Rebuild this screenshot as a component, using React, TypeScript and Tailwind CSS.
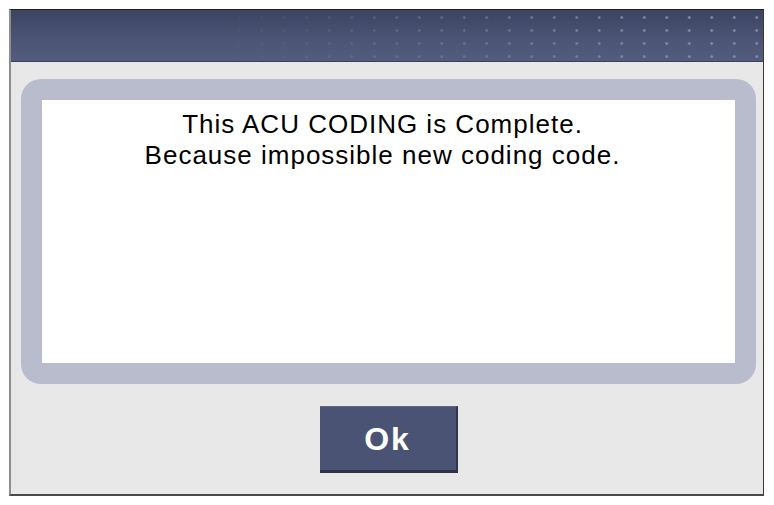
import React from "react";

const App = () => {
  return (
    <div className="w-[774px] h-[505px] bg-white pt-[9px] pl-[9px] font-['Liberation_Sans',Arial,sans-serif]">
      <div className="w-[755px] h-[487px] flex flex-col bg-[#e8e8e8] border-t border-t-[#222] border-l-2 border-l-[#8e8e8e] border-r border-r-[#3a3a3a] border-b-2 border-b-[#4a4a4a]">
        {/* title bar */}
        <div className="relative h-[52px] shrink-0 bg-[linear-gradient(to_bottom,#3d4462,#4c5576_60%,#535c7d)] border-b border-b-[#3a4058]">
          <div className="absolute inset-0 bg-[radial-gradient(circle,#838aa6_1px,transparent_1.6px)] bg-size-[22.5px_13px] bg-position-[-8px_1px] [mask-image:linear-gradient(to_right,transparent_25%,rgba(0,0,0,0.45)_55%,black_88%)]" />
        </div>

        {/* message frame */}
        <div className="mt-[17px] ml-[10px] mr-[7px] rounded-[20px] bg-[#b8bccc] p-[21px]">
          <div className="h-[263px] bg-white pt-[9px] pr-[12px] text-center text-black text-[26px] leading-[31px] tracking-[1px]">
            <p>This ACU CODING is Complete.</p>
            <p>Because impossible new coding code.</p>
          </div>
        </div>

        <div className="flex justify-center ml-[10px] mr-[7px] mt-[22px]">
          <button className="w-[138px] h-[67px] bg-[#4a5374] border-b-[3px] border-b-[#2e3348] border-r-2 border-r-[#30354a] border-t border-t-[#5d6686] text-white text-[32px] font-bold tracking-[2px] leading-none">
            Ok
          </button>
        </div>
      </div>
    </div>
  );
};

export default App;
